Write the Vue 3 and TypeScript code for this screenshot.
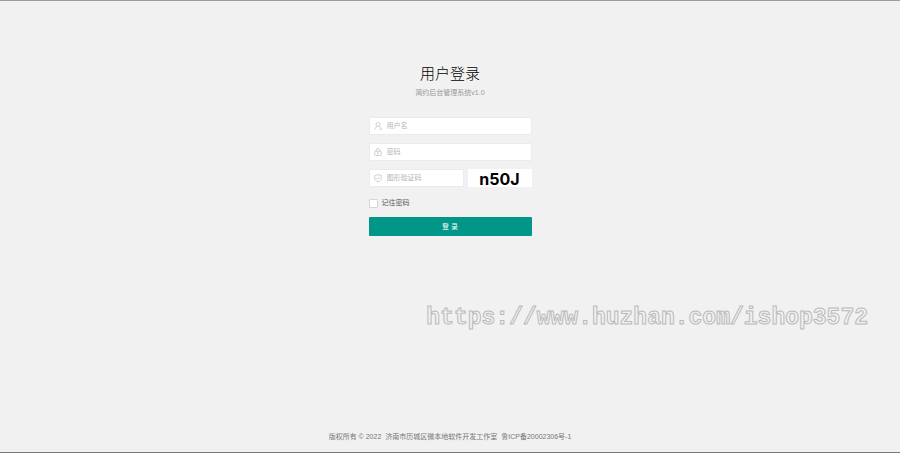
<script setup lang="ts">
import { ref } from 'vue'

const username = ref('')
const password = ref('')
const captcha = ref('')
const remember = ref(false)
const captchaText = 'n50J'
</script>

<template>
  <div class="page">
    <main class="login">
      <header class="head">
        <h1>用户登录</h1>
        <p>简约后台管理系统v1.0</p>
      </header>
      <form class="form" @submit.prevent>
        <label class="field">
          <svg class="icon" viewBox="0 0 16 16" aria-hidden="true">
            <circle cx="8" cy="5" r="4" />
            <path d="M1.500 15.500c.3-3.500 2-5.500 4.500-6.500M10 9c2.500 1 4.200 3 4.500 6.500M11 14.500h3.500" />
          </svg>
          <input v-model="username" type="text" placeholder="用户名" aria-label="用户名" />
        </label>
        <label class="field">
          <svg class="icon" viewBox="0 0 16 16" aria-hidden="true">
            <rect x="1.500" y="6.500" width="13" height="8.500" rx="1" />
            <path d="M4.500 6.500V4.500a3.500 3.500 0 0 1 7 0v2M8 9v3.500M6.500 10h3" />
          </svg>
          <input v-model="password" type="password" placeholder="密码" aria-label="密码" />
        </label>
        <div class="row">
          <label class="field">
            <svg class="icon" viewBox="0 0 16 16" aria-hidden="true">
              <path d="M8 1c2 1.300 4.200 2 6.500 2v5c0 3.500-2.500 5.800-6.500 7.500C4 13.800 1.500 11.500 1.500 8V3C3.800 3 6 2.300 8 1z" />
              <path d="M4.800 8l2.500 2.500 4-4.500" />
            </svg>
            <input v-model="captcha" type="text" placeholder="图形验证码" aria-label="图形验证码" />
          </label>
          <button class="captcha" type="button">{{ captchaText }}</button>
        </div>
        <label class="remember">
          <input v-model="remember" type="checkbox" />
          <span>记住密码</span>
        </label>
        <button class="submit" type="submit">登 录</button>
      </form>
    </main>
    <p class="watermark">https://www.huzhan.com/ishop3572</p>
    <footer class="footer">
      <span>版权所有 © 2022</span>
      <span>济南市历城区微本地软件开发工作室</span>
      <a href="#">鲁ICP备20002306号-1</a>
    </footer>
  </div>
</template>

<style>
body {
  margin: 0;
  background: #f1f1f1;
}
</style>

<style scoped>
.page {
  box-sizing: border-box;
  position: relative;
  min-height: 100vh;
  display: flex;
  flex-direction: column;
  align-items: center;
  padding: 64px 16px 10px;
  border-top: 1px solid #9c9ba6;
  border-bottom: 1px solid #777;
  background: #f1f1f1;
  font-family: "Liberation Sans", "Noto Sans CJK SC", sans-serif;
  font-size: 7px;
  line-height: 10px;
  color: #555;
}

.login {
  width: 100%;
  max-width: 163px;
}

.head {
  text-align: center;
  margin-bottom: 19px;
}

h1 {
  margin: 0 0 5px;
  font-size: 15px;
  line-height: 18px;
  font-weight: 300;
  color: #000;
}

.head p {
  margin: 0;
  color: #999;
}

.form {
  display: flex;
  flex-direction: column;
  gap: 8px;
}

.field {
  box-sizing: border-box;
  flex: 1;
  min-width: 0;
  display: flex;
  align-items: center;
  gap: 5px;
  padding: 3px 4px;
  background: #fff;
  border: 1px solid #ebebeb;
  border-radius: 1px;
}

.icon {
  flex: none;
  width: 8px;
  height: 8px;
  fill: none;
  stroke: #c0c0c0;
  stroke-width: 1.5;
}

.field input {
  flex: 1;
  min-width: 0;
  height: 10px;
  padding: 0;
  border: 0;
  outline: 0;
  background: transparent;
  font: inherit;
  color: #555;
}

.field input::placeholder {
  color: #b4b4b4;
}

.row {
  display: flex;
  gap: 4px;
}

.captcha {
  flex: none;
  width: 64px;
  padding: 2px 0 0;
  border: 0;
  background: #fff;
  font: bold 16px/16px Inter, sans-serif;
  color: #000;
}

.remember {
  display: flex;
  align-items: center;
  gap: 4px;
  margin: 3px 0 1px;
  align-self: flex-start;
}

.remember input {
  appearance: none;
  box-sizing: border-box;
  width: 9px;
  height: 9px;
  margin: 0;
  border: 1px solid #d6d6d6;
  border-radius: 1px;
  background: #fff;
}

.remember input:checked {
  background: #009688;
}

.submit {
  height: 19px;
  padding: 0;
  border: 0;
  border-radius: 1px;
  background: #009688;
  font: inherit;
  color: #fff;
}

.watermark {
  position: absolute;
  right: 32px;
  bottom: 120px;
  margin: 0;
  font: bold 23px/28px "Liberation Mono", monospace;
  color: #f1f1f1;
  -webkit-text-stroke: 1px #bababa;
  pointer-events: none;
}

.footer {
  display: flex;
  gap: 4px;
  margin-top: auto;
  color: #777;
}

.footer a {
  color: inherit;
  text-decoration: none;
}
</style>
